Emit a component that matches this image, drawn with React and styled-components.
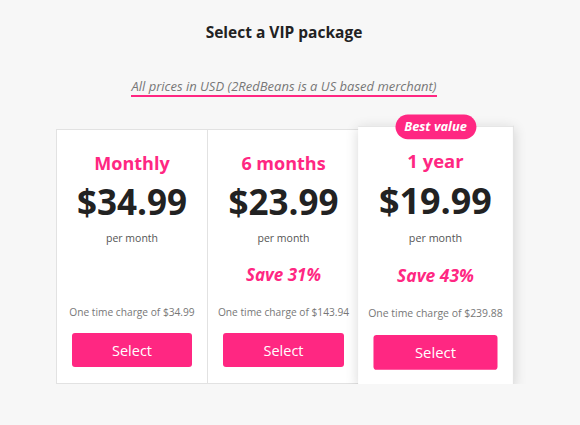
import { createGlobalStyle, styled } from "styled-components"

const pink = "#ff2782"

const GlobalStyle = createGlobalStyle`
  body {
    margin: 0;
    background: #f7f7f7;
    font-family: "Open Sans", "Liberation Sans", sans-serif;
    color: #222;
  }
  * { box-sizing: border-box; }
`

const Page = styled.div`
  width: 568px;
  padding-top: 21px;
  display: flex;
  flex-direction: column;
  align-items: center;
`

const Title = styled.h1`
  margin: 0;
  font-size: 15.5px;
  line-height: 22px;
  font-weight: 700;
  color: #222;
`

const Note = styled.p`
  margin: 35px 0 0;
  display: inline-block;
  font-size: 13px;
  line-height: 17px;
  font-style: italic;
  color: #777;
  border-bottom: 2px solid ${pink};
`

const Plans = styled.div`
  display: flex;
  margin-top: 32px;
`

const Card = styled.div`
  position: relative;
  width: 152px;
  display: flex;
  flex-direction: column;
  align-items: center;
  padding: 21px 15px 16px;
  background: #fff;
  border: 1px solid #e2e2e2;
  border-left-width: ${({ $first }) => ($first ? "1px" : "0")};
  transform: ${({ $featured }) => ($featured ? "scale(1.025)" : "none")};
  box-shadow: ${({ $featured }) =>
    $featured ? "0 2px 12px rgba(0, 0, 0, 0.16)" : "none"};
  z-index: ${({ $featured }) => ($featured ? 1 : 0)};
`

const Badge = styled.div`
  position: absolute;
  top: -12px;
  left: 50%;
  transform: translateX(-50%);
  height: 24px;
  padding: 0 9px;
  border-radius: 12px;
  background: ${pink};
  color: #fff;
  font-size: 12.5px;
  line-height: 24px;
  font-weight: 700;
  font-style: italic;
  white-space: nowrap;
`

const Name = styled.div`
  font-size: 18px;
  line-height: 24px;
  font-weight: 700;
  color: ${pink};
`

const Price = styled.div`
  margin-top: 7px;
  font-size: 35px;
  line-height: 40px;
  font-weight: 700;
  color: #222;
`

const Period = styled.div`
  margin-top: 9px;
  font-size: 10.5px;
  line-height: 14px;
  color: #555;
`

const Save = styled.div`
  margin-top: 19px;
  height: 22px;
  font-size: 17px;
  line-height: 22px;
  font-weight: 700;
  font-style: italic;
  color: ${pink};
`

const Charge = styled.div`
  margin-top: 19px;
  font-size: 10.2px;
  line-height: 14px;
  color: #777;
  white-space: nowrap;
`

const SelectButton = styled.button`
  margin-top: 14px;
  width: 100%;
  height: 34px;
  border: none;
  border-radius: 3px;
  background: ${pink};
  color: #fff;
  font-family: inherit;
  font-size: 14.5px;
  cursor: pointer;
`

const plans = [
  { name: "Monthly", price: "$34.99", total: "$34.99" },
  { name: "6 months", price: "$23.99", save: "Save 31%", total: "$143.94" },
  {
    name: "1 year",
    price: "$19.99",
    save: "Save 43%",
    total: "$239.88",
    featured: true,
  },
]

const App = () => (
  <>
    <GlobalStyle />
    <Page>
      <Title>Select a VIP package</Title>
      <Note>All prices in USD (2RedBeans is a US based merchant)</Note>
      <Plans>
        {plans.map((plan, i) => (
          <Card key={plan.name} $first={i === 0} $featured={plan.featured}>
            {plan.featured ? <Badge>Best value</Badge> : null}
            <Name>{plan.name}</Name>
            <Price>{plan.price}</Price>
            <Period>per month</Period>
            <Save>{plan.save}</Save>
            <Charge>One time charge of {plan.total}</Charge>
            <SelectButton>Select</SelectButton>
          </Card>
        ))}
      </Plans>
    </Page>
  </>
)

export default App
